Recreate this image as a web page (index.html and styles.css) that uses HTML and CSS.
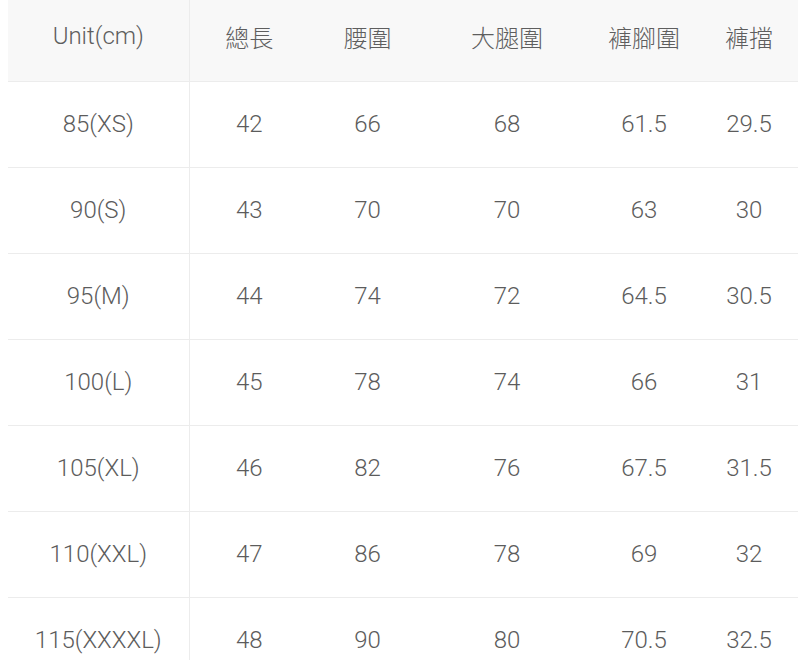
FILE: index.html
```html
<!DOCTYPE html>
<html lang="zh-Hant">
<head>
<meta charset="utf-8">
<link rel="stylesheet" href="styles.css">
</head>
<body>
<div class="wrap">
<table class="size-table">
  <colgroup>
    <col class="c1"><col class="c2"><col class="c3"><col class="c4"><col class="c5"><col class="c6">
  </colgroup>
  <thead>
    <tr class="head"><th>Unit(cm)</th><th>總長</th><th>腰圍</th><th>大腿圍</th><th>褲腳圍</th><th>褲擋</th></tr>
  </thead>
  <tbody>
    <tr><td>85(XS)</td><td>42</td><td>66</td><td>68</td><td>61.5</td><td>29.5</td></tr>
    <tr><td>90(S)</td><td>43</td><td>70</td><td>70</td><td>63</td><td>30</td></tr>
    <tr><td>95(M)</td><td>44</td><td>74</td><td>72</td><td>64.5</td><td>30.5</td></tr>
    <tr><td>100(L)</td><td>45</td><td>78</td><td>74</td><td>66</td><td>31</td></tr>
    <tr><td>105(XL)</td><td>46</td><td>82</td><td>76</td><td>67.5</td><td>31.5</td></tr>
    <tr><td>110(XXL)</td><td>47</td><td>86</td><td>78</td><td>69</td><td>32</td></tr>
    <tr><td>115(XXXXL)</td><td>48</td><td>90</td><td>80</td><td>70.5</td><td>32.5</td></tr>
  </tbody>
</table>
</div>
</body>
</html>
```
FILE: styles.css
```css
html, body {
  margin: 0;
  padding: 0;
  background: #ffffff;
}
.wrap {
  padding: 0 5px 0 8px;
}
.size-table {
  width: 790px;
  table-layout: fixed;
  border-collapse: collapse;
  font-family: Roboto, "Noto Sans CJK TC", sans-serif;
  font-size: 24px;
  font-weight: 300;
  color: #5c5c5c;
}
.c1 { width: 181px; }
.c2 { width: 120px; }
.c3 { width: 117px; }
.c4 { width: 162px; }
.c5 { width: 112px; }
.c6 { width: 98px; }
.size-table th,
.size-table td {
  padding: 0;
  text-align: center;
  vertical-align: middle;
  border-bottom: 1px solid #ececec;
}
.size-table th {
  font-weight: 300;
  height: 81px;
  padding-bottom: 8px;
  box-sizing: border-box;
  background: #f8f8f8;
  color: #5e5e5e;
}
.size-table td {
  height: 85px;
}
.size-table th:first-child,
.size-table td:first-child {
  border-right: 1px solid #ececec;
}
```
